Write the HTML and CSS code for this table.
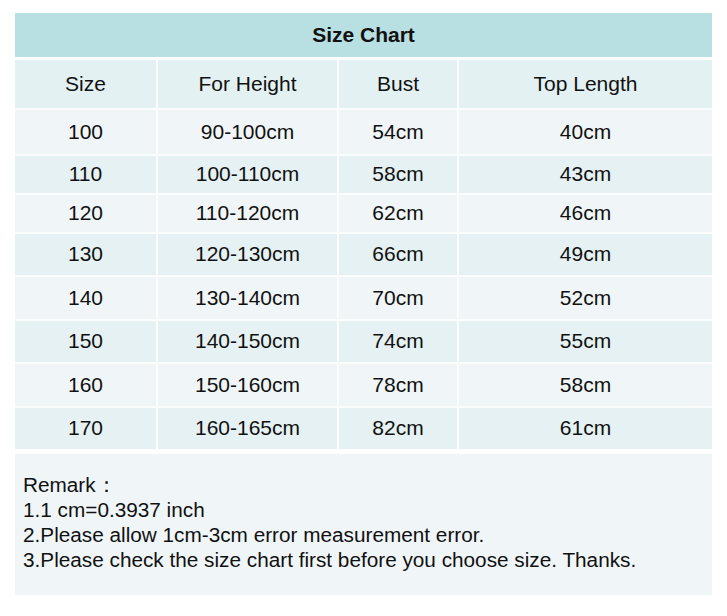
FILE: index.html
```html
<!DOCTYPE html>
<html>
<head>
<meta charset="utf-8">
<link rel="stylesheet" href="styles.css">
</head>
<body>
<div class="chart">
  <div class="title">Size Chart</div>
  <div class="grid">
    <div class="cell head">Size</div><div class="cell head">For Height</div><div class="cell head">Bust</div><div class="cell head">Top Length</div>
    <div class="cell r1 lt">100</div><div class="cell r1 lt">90-100cm</div><div class="cell r1 lt">54cm</div><div class="cell r1 lt">40cm</div>
    <div class="cell r2 dk">110</div><div class="cell r2 dk">100-110cm</div><div class="cell r2 dk">58cm</div><div class="cell r2 dk">43cm</div>
    <div class="cell r2 lt">120</div><div class="cell r2 lt">110-120cm</div><div class="cell r2 lt">62cm</div><div class="cell r2 lt">46cm</div>
    <div class="cell r3 dk">130</div><div class="cell r3 dk">120-130cm</div><div class="cell r3 dk">66cm</div><div class="cell r3 dk">49cm</div>
    <div class="cell r4 lt">140</div><div class="cell r4 lt">130-140cm</div><div class="cell r4 lt">70cm</div><div class="cell r4 lt">52cm</div>
    <div class="cell r3 dk">150</div><div class="cell r3 dk">140-150cm</div><div class="cell r3 dk">74cm</div><div class="cell r3 dk">55cm</div>
    <div class="cell r4 lt">160</div><div class="cell r4 lt">150-160cm</div><div class="cell r4 lt">78cm</div><div class="cell r4 lt">58cm</div>
    <div class="cell r3 dk">170</div><div class="cell r3 dk">160-165cm</div><div class="cell r3 dk">82cm</div><div class="cell r3 dk">61cm</div>
  </div>
  <div class="remark">
    <p>Remark：</p>
    <p>1.1 cm=0.3937 inch</p>
    <p>2.Please allow 1cm-3cm error measurement error.</p>
    <p>3.Please check the size chart first before you choose size. Thanks.</p>
  </div>
</div>
</body>
</html>
```
FILE: styles.css
```css
html, body {
  margin: 0;
  padding: 0;
  background: #ffffff;
}
body {
  font-family: "Liberation Sans", Arial, sans-serif;
  color: #111111;
  font-size: 21px;
}
.chart {
  width: 697px;
  margin: 13px 0 0 15px;
}
.title {
  height: 44px;
  background: #b8dfe2;
  font-weight: bold;
  display: flex;
  align-items: center;
  justify-content: center;
  margin-bottom: 3px;
}
.grid {
  display: grid;
  grid-template-columns: 141px 179px 118px 253px;
  column-gap: 2px;
  row-gap: 2px;
  background: #fbfdfd;
}
.cell {
  box-sizing: border-box;
  display: flex;
  align-items: center;
  justify-content: center;
  padding-bottom: 1px;
}
.head {
  height: 48px;
  background: #e4f1f3;
}
.lt { background: #f0f6f8; }
.dk { background: #e5f1f3; }
.r1 { height: 44px; }
.r2 { height: 37px; }
.r3 { height: 41px; }
.r4 { height: 42px; }
.remark {
  margin-top: 5px;
  background: #f0f6f8;
  padding: 18px 8px 23px;
  font-size: 20.75px;
}
.remark p {
  margin: 0;
  line-height: 25px;
}
```
